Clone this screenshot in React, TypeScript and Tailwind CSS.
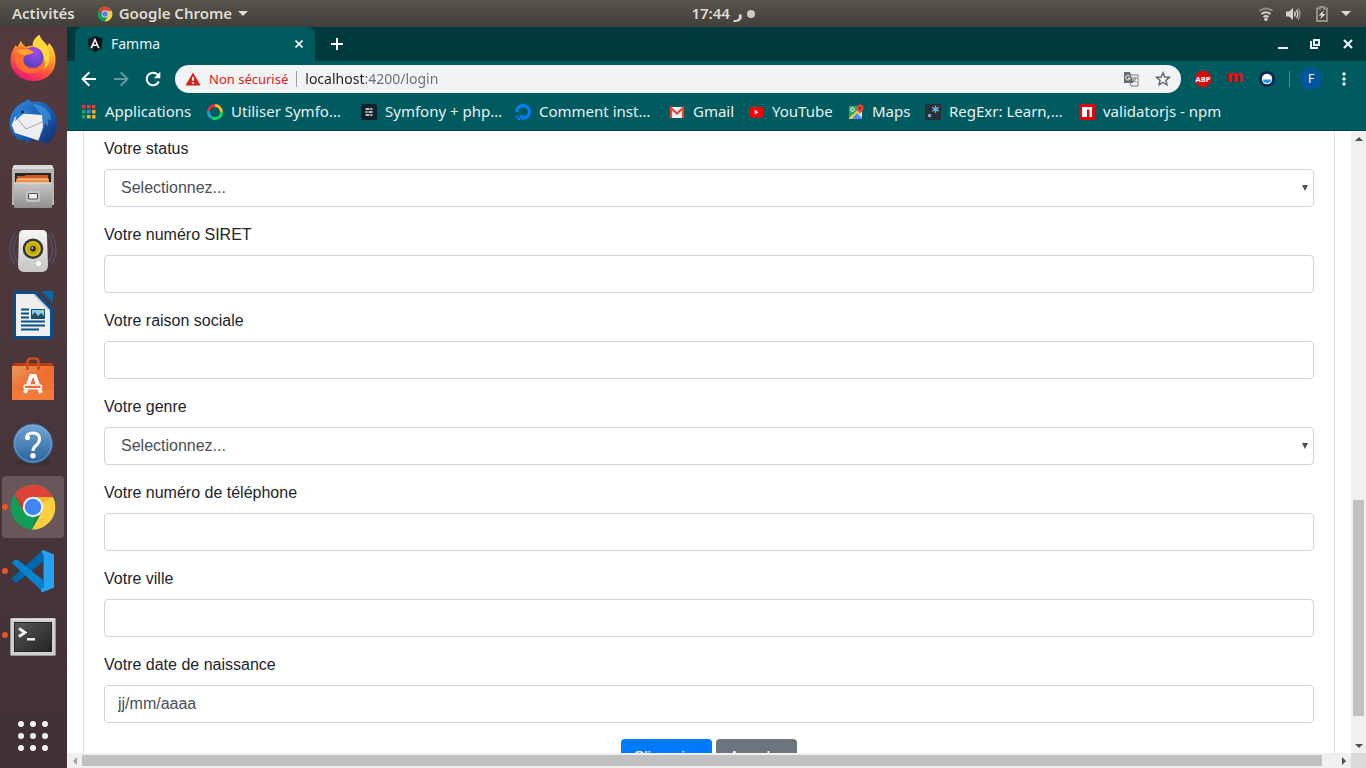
import React, { useId } from "react";

type IconProps = { className?: string };

function ChromeIcon({ className }: IconProps) {
  return (
    <svg viewBox="0 0 48 48" className={className} aria-hidden="true">
      <circle cx="24" cy="24" r="22.4" fill="#0f9d58" />
      <path d="M24 14H43.9A22.4 22.4 0 0 1 22.9 46.4L32.7 29Z" fill="#ffcd40" />
      <path d="M24 14H43.9A22.4 22.4 0 0 0 5.2 11.8L15.3 29L24 24Z" fill="#db4437" />
      <path d="M15.3 29L5.2 11.8L14.5 21Z" fill="#b83226" opacity=".6" />
      <path d="M24 14H43.9L33.5 20Z" fill="#d9a520" opacity=".5" />
      <path d="M32.7 29L22.9 46.4L26 33Z" fill="#0a7a43" opacity=".5" />
      <circle cx="24" cy="24" r="10.2" fill="#f1f1f1" />
      <circle cx="24" cy="24" r="8.2" fill="#4285f4" />
    </svg>
  );
}

function FirefoxIcon({ className }: IconProps) {
  const id = useId();
  return (
    <svg viewBox="0 0 48 48" className={className} aria-hidden="true">
      <defs>
        <linearGradient id={id + "a"} x1=".8" y1="0" x2=".3" y2="1">
          <stop offset="0" stopColor="#fff14a" />
          <stop offset=".35" stopColor="#ffa82a" />
          <stop offset=".65" stopColor="#ff5a36" />
          <stop offset="1" stopColor="#e6127a" />
        </linearGradient>
        <radialGradient id={id + "b"} cx=".6" cy=".25" r=".8">
          <stop offset="0" stopColor="#a04bf2" />
          <stop offset="1" stopColor="#4e43b5" />
        </radialGradient>
      </defs>
      <path d="M30.5 0C32 5 36 7 38.500 11L40 8C45 13 47 20 46.500 27C45.500 39 36 46 24.500 46C11 46 1.500 36.500 1.500 25C1.500 18 4 15 6.500 10L8.500 12L12 5.500C12.500 8 14.500 10 17 12C20 10.500 22 10.500 24 11C24 6 27 2 30.500 0Z" fill={"url(#" + id + "a)"} />
      <path d="M30.500 0C32 6 37 8 39.500 15C42 23 40 31 34 35C37 29 36 19 31 15C28 13 24 12 23.500 10C24 5 27 2 30.500 0Z" fill="#ffd83b" />
      <circle cx="24" cy="22.500" r="10.500" fill={"url(#" + id + "b)"} />
      <path d="M7 14C11 11 19 12 25 17C23 20 18 18.500 16 21C13 24 14 30 19 33C26 36 33 32 37 26C36 37 22 42 12 35C5 29 4 21 7 14Z" fill="#ff6d32" />
      <path d="M7 15C12 13 20 14 24.500 17C23 19.500 18 18.500 16 20.500C12 20 9 18 7 15Z" fill="#ffa52e" />
    </svg>
  );
}

function ThunderbirdIcon({ className }: IconProps) {
  const id = useId();
  return (
    <svg viewBox="0 0 48 48" className={className} aria-hidden="true">
      <defs>
        <linearGradient id={id} x1="0" y1="0" x2="1" y2="1">
          <stop offset="0" stopColor="#3489dd" />
          <stop offset=".5" stopColor="#1760b3" />
          <stop offset="1" stopColor="#152969" />
        </linearGradient>
      </defs>
      <path d="M15 3L20 0L22 3C37 0 48 12 48 25C48 34 43 42 35 47L36 42C30 44 25 42 24 40L17 45L17 41L10 41C3 36 0 29 0.500 22C2 12 8 6 15 3Z" fill={"url(#" + id + ")"} />
      <path d="M24 5C36 6 43 14 42 22L39 20L39 28L36 24L33 34L29 26L32 16Z" fill="#4aa4e8" opacity=".55" />
      <path d="M6 18L14 14.500L33 16L34 28L29.500 41.500L6 34L2.700 26Z" fill="#eeeef0" />
      <path d="M7 18L17 30L33 23" fill="none" stroke="#a7a8ad" strokeWidth="1" />
      <path d="M8 15C12 8 17 9 21 13L14 15L6 22Z" fill="#277bd0" />
      <circle cx="13.500" cy="13" r="1.500" fill="#17254a" />
    </svg>
  );
}

function FilesIcon({ className }: IconProps) {
  const id = useId();
  return (
    <svg viewBox="0 0 48 48" className={className} aria-hidden="true">
      <defs>
        <linearGradient id={id} x1="0" y1="0" x2="0" y2="1">
          <stop offset="0" stopColor="#c9c9c9" />
          <stop offset="1" stopColor="#8e8e8e" />
        </linearGradient>
      </defs>
      <path d="M5 2H43L45 7V42H3V7Z" fill="#b5b5b5" />
      <path d="M5 2H43L45 6H3Z" fill="#dcdcdc" />
      <rect x="6" y="10" width="36" height="10" fill="#252525" />
      <path d="M8 13H15L17 12H39L40 20H7Z" fill="#d4591c" />
      <path d="M7 16H40V20H7Z" fill="#ef8d42" />
      <path d="M9 16H39" stroke="#ffe3b2" strokeWidth="1" />
      <rect x="5" y="19.500" width="38" height="25.500" rx="1" fill={"url(#" + id + ")"} />
      <path d="M5 20H43" stroke="#e0e0e0" />
      <rect x="17" y="28" width="14" height="11" rx="2" fill="#c4c4c4" />
      <rect x="19.500" y="30.500" width="9" height="5.500" rx="1" fill="#eee" stroke="#555" strokeWidth="1.200" />
    </svg>
  );
}

function RhythmboxIcon({ className }: IconProps) {
  const id = useId();
  return (
    <svg viewBox="0 0 48 48" className={className} aria-hidden="true">
      <defs>
        <linearGradient id={id} x1="0" y1="0" x2="0" y2="1">
          <stop offset="0" stopColor="#f6f6f4" />
          <stop offset="1" stopColor="#c6c6c4" />
        </linearGradient>
      </defs>
      <g fill="none" stroke="#56679a" strokeWidth="1.200" opacity=".6">
        <path d="M6 6Q-4 22 6 38M9 8Q0 22 9 36M42 6Q52 22 42 38M39 8Q48 22 39 36" />
      </g>
      <path d="M15 3H33Q38 3 38 8L39 38Q39 45 33 45H15Q9 45 9 38L10 8Q10 3 15 3Z" fill={"url(#" + id + ")"} />
      <circle cx="24" cy="21.700" r="10.300" fill="#34363b" />
      <circle cx="24" cy="21.700" r="7.800" fill="#d9bc16" />
      <circle cx="24" cy="21.700" r="5" fill="none" stroke="#a8900a" />
      <circle cx="24" cy="21.700" r="3" fill="#303238" />
      <circle cx="23.300" cy="21" r="1" fill="#bbb" />
      <circle cx="29.500" cy="36.500" r="3.500" fill="#f7f7f7" stroke="#bdbdbd" />
      <rect x="14" y="35" width="5" height="5" rx="1" fill="none" stroke="#c5c5c5" />
    </svg>
  );
}

function WriterIcon({ className }: IconProps) {
  return (
    <svg viewBox="0 0 48 48" className={className} aria-hidden="true">
      <path d="M6 0H27L44 17V45.500Q44 48 42 48H6Q4 48 4 46V2Q4 0 6 0Z" fill="#07508a" />
      <path d="M32 0H44V12Z" fill="#0768a5" />
      <path d="M7 3H25.500L41 19V45H7Z" fill="#efefef" />
      <path d="M25.500 3L41 19V21L25 5Z" fill="#c8c8c8" />
      <path d="M12 18.500H20M12 22.500H20M12 26.500H20M12 30.500H36M12 34.500H36M12 38.500H30" stroke="#07508a" strokeWidth="2" />
      <rect x="22.500" y="18.500" width="13" height="9" fill="#8dd0f1" stroke="#07508a" />
      <path d="M23 27V24L26 21L29 25L32 22L35 25V27Z" fill="#2b4e59" />
      <circle cx="34" cy="20" r="1.300" fill="#e6c32a" />
    </svg>
  );
}

function SoftwareIcon({ className }: IconProps) {
  const id = useId();
  return (
    <svg viewBox="0 0 48 48" className={className} aria-hidden="true">
      <defs>
        <linearGradient id={id} x1="0" y1="0" x2="1" y2="1">
          <stop offset="0" stopColor="#e8995c" />
          <stop offset=".5" stopColor="#ee6d31" />
          <stop offset="1" stopColor="#f17739" />
        </linearGradient>
      </defs>
      <path d="M5 8H43L45 12H3Z" fill="#b63f14" />
      <path d="M3 11H45V45H3Z" fill={"url(#" + id + ")"} />
      <path d="M3 35H45V45H3Z" fill="#f5803f" opacity=".65" />
      <path d="M18.500 15V7Q18.500 3.500 22 3.500H26Q29.500 3.500 29.500 7V15" fill="none" stroke="#cf4c1d" strokeWidth="2.600" />
      <path d="M16 38L22.200 21H25.800L32 38" fill="none" stroke="#fff" strokeWidth="3.800" />
      <path d="M13.500 29.500H34.500V34.500H13.500Z" fill="#ee6d31" />
      <rect x="15" y="30" width="17.500" height="3.800" rx="1.900" fill="#ee6d31" stroke="#fff" strokeWidth="1.600" />
    </svg>
  );
}

function HelpIcon({ className }: IconProps) {
  const id = useId();
  return (
    <svg viewBox="0 0 48 48" className={className} aria-hidden="true">
      <defs>
        <linearGradient id={id} x1="0" y1="0" x2="0" y2="1">
          <stop offset="0" stopColor="#72a5d6" />
          <stop offset="1" stopColor="#29649c" />
        </linearGradient>
      </defs>
      <ellipse cx="24" cy="43" rx="18" ry="4" fill="#30252a" opacity=".4" />
      <circle cx="24" cy="24.500" r="19.500" fill={"url(#" + id + ")"} stroke="#3569a0" />
      <circle cx="24" cy="24.500" r="18.300" fill="none" stroke="#8eb9e2" strokeWidth=".8" opacity=".7" />
      <path d="M17.500 19Q17.500 14 24 14Q30.500 14 30.500 20Q30.500 23.500 27 26.500Q24 29 24 32" fill="none" stroke="#fff" strokeWidth="3" />
      <circle cx="18.500" cy="18.800" r="2.500" fill="#fff" />
      <circle cx="24" cy="36.700" r="2.700" fill="#fff" />
    </svg>
  );
}

function CodeIcon({ className }: IconProps) {
  return (
    <svg viewBox="0 0 48 48" className={className} aria-hidden="true">
      <path d="M3 31.500Q2.500 33 4 34L6 35.500Q7.500 36 8.500 35L34 15V3L4 30Z" fill="#0068aa" />
      <path d="M3.500 16.500Q2.500 15.500 4 14.500L6 12.800Q7.500 12 9 13L34 33V45Z" fill="#0a83cf" />
      <path d="M34 3L45 7.500V40.500L34 45Q31.500 45 32 43L34.500 40V8Q31.500 4 34 3Z" fill="#27a2f2" />
    </svg>
  );
}

function TerminalIcon({ className }: IconProps) {
  const id = useId();
  return (
    <svg viewBox="0 0 48 48" className={className} aria-hidden="true">
      <defs>
        <linearGradient id={id} x1="0" y1="0" x2="1" y2="1">
          <stop offset="0" stopColor="#565856" />
          <stop offset=".5" stopColor="#3c3e3c" />
          <stop offset="1" stopColor="#222" />
        </linearGradient>
      </defs>
      <rect x="1.500" y="7.500" width="45" height="37" rx="1" fill="#cfcfcf" stroke="#989898" />
      <path d="M2 8H46" stroke="#f6f6f6" />
      <rect x="5" y="11" width="38" height="30" fill="#232523" />
      <rect x="6" y="12" width="36" height="28" fill={"url(#" + id + ")"} />
      <path d="M10 17.500L16 21.500L10 25.500" fill="none" stroke="#f4f4f4" strokeWidth="2.800" />
      <path d="M18 28.300H26" stroke="#f4f4f4" strokeWidth="2.400" />
    </svg>
  );
}

const dockApps = [
  { name: "Firefox", Icon: FirefoxIcon, running: false, active: false },
  { name: "Thunderbird", Icon: ThunderbirdIcon, running: false, active: false },
  { name: "Fichiers", Icon: FilesIcon, running: false, active: false },
  { name: "Rhythmbox", Icon: RhythmboxIcon, running: false, active: false },
  { name: "LibreOffice Writer", Icon: WriterIcon, running: false, active: false },
  { name: "Logiciels", Icon: SoftwareIcon, running: false, active: false },
  { name: "Aide", Icon: HelpIcon, running: false, active: false },
  { name: "Google Chrome", Icon: ChromeIcon, running: true, active: true },
  { name: "Visual Studio Code", Icon: CodeIcon, running: true, active: false },
  { name: "Terminal", Icon: TerminalIcon, running: true, active: false },
];

function Dock() {
  return (
    <nav aria-label="Dock" className="flex w-[67px] shrink-0 flex-col gap-0.5 bg-linear-to-b from-[#533a3e] to-[#403135] px-0.5 pt-px">
      {dockApps.map(({ name, Icon, running, active }) => (
        <button
          key={name}
          aria-label={name}
          className={"relative flex h-[62px] w-[62px] shrink-0 items-center justify-center rounded " + (active ? "bg-[#69565a]" : "")}
        >
          {running && <span className="absolute left-0 size-[6px] rounded-full bg-[#e95420]" />}
          <Icon className="size-12" />
        </button>
      ))}
      <button aria-label="Afficher les applications" className="mt-auto mb-px flex h-[62px] w-[62px] items-center justify-center">
        <svg viewBox="0 0 32 32" className="size-8" fill="#f2f2f2" aria-hidden="true">
          {[4, 16, 28].map((y) => [4, 16, 28].map((x) => <circle key={x + "-" + y} cx={x} cy={y} r="3" />))}
        </svg>
      </button>
    </nav>
  );
}

function TopBar() {
  return (
    <header className="grid h-[27px] shrink-0 grid-cols-3 items-center bg-linear-to-b from-[#58544c] to-[#403f3a] text-[15px] font-semibold text-[#dfdbd2]">
      <div className="flex items-center pl-3">
        <button className="mr-[22px]">Activités</button>
        <button className="flex items-center gap-1.5">
          <ChromeIcon className="size-4" />
          Google Chrome
          <svg viewBox="0 0 10 5" className="h-[5px] w-[10px]" aria-hidden="true"><path d="M0 0H10L5 5Z" fill="#dfdbd2" /></svg>
        </button>
      </div>
      <button className="flex items-center justify-center gap-1 pl-[80px]">
        <span>17:44</span>
        <span className="font-['DejaVu_Sans',sans-serif]">ر</span>
        <span className="size-2 rounded-full bg-[#cfccc5]" />
      </button>
      <div className="flex items-center justify-end gap-[11px] pr-[15px]">
        <svg viewBox="0 0 16 16" className="size-4" fill="none" stroke="#d5d2cb" strokeWidth="2" aria-label="Wi-Fi">
          <path d="M1.500 5Q8 0 14.500 5" stroke="#8f8d87" /><path d="M3.500 8Q8 4.500 12.500 8M5.500 11Q8 9 10.500 11" /><circle cx="8" cy="13.200" r="1.800" fill="#d5d2cb" stroke="none" />
        </svg>
        <svg viewBox="0 0 16 16" className="size-4" fill="none" stroke="#d5d2cb" strokeWidth="1.500" aria-label="Volume">
          <path d="M1 5.500H4L8 2V14L4 10.500H1Z" fill="#d5d2cb" stroke="none" /><path d="M9.500 5.500Q11 8 9.500 10.500M11.500 4Q14 8 11.500 12" /><path d="M13 2Q17 8 13 14" stroke="#8f8d87" />
        </svg>
        <svg viewBox="0 0 16 16" className="ml-0.5 size-4" aria-label="Batterie">
          <path d="M6 1H10V2.500H13V15H3V2.500H6Z" fill="none" stroke="#96938c" strokeWidth="1.800" /><path d="M10 4L4.500 9.500H7.500L6 13.500L11.500 8H8.500Z" fill="#dfdbd2" />
        </svg>
        <svg viewBox="0 0 10 5" className="h-[5px] w-[10px]" aria-hidden="true"><path d="M0 0H10L5 5Z" fill="#dfdbd2" /></svg>
      </div>
    </header>
  );
}

function TabStrip() {
  return (
    <div className="flex h-[34px] shrink-0 items-stretch bg-[#003a3e] pl-2">
      <div className="flex w-60 items-center rounded-t-lg bg-[#005b61] pr-[11px] pl-3 text-sm text-[#e8f1f1]">
        <svg viewBox="0 0 16 16" className="size-4" aria-hidden="true">
          <path d="M8 0L15.500 2.700L14.300 12.500L8 16L1.700 12.500L.5 2.700Z" fill="#172126" />
          <path d="M8 0L15.500 2.700L14.300 12.500L8 16Z" fill="#0b1115" />
          <path d="M8 1.800L3.300 12.200H5.100L6 9.900H10L10.900 12.200H12.700ZM8 5.100L9.400 8.400H6.600Z" fill="#fff" fillRule="evenodd" />
        </svg>
        <span className="ml-2 flex-1">Famma</span>
        <button aria-label="Fermer l'onglet" className="p-px">
          <svg viewBox="0 0 8 8" className="size-2" stroke="#f0f6f6" strokeWidth="1.700" aria-hidden="true"><path d="M.5 .5L7.500 7.500M7.500 .5L.5 7.500" /></svg>
        </button>
      </div>
      <button aria-label="Nouvel onglet" className="ml-4 flex items-center">
        <svg viewBox="0 0 12 12" className="size-3" stroke="#fff" strokeWidth="2" aria-hidden="true"><path d="M6 0V12M0 6H12" /></svg>
      </button>
      <div className="ml-auto flex items-center gap-5 pr-3">
        <button aria-label="Réduire">
          <svg viewBox="0 0 12 12" className="size-3" aria-hidden="true"><path d="M0 9H10V11H0Z" fill="#e8f0f0" /></svg>
        </button>
        <button aria-label="Restaurer">
          <svg viewBox="0 0 12 12" className="size-3" fill="none" stroke="#e8f0f0" aria-hidden="true"><path d="M4 2H9V7H4Z" strokeWidth="2" /><path d="M1 3V10H8" strokeWidth="2" /></svg>
        </button>
        <button aria-label="Fermer">
          <svg viewBox="0 0 12 12" className="size-3" stroke="#e8f0f0" strokeWidth="2.200" aria-hidden="true"><path d="M2 2L10 10M10 2L2 10" /></svg>
        </button>
      </div>
    </div>
  );
}

function Toolbar() {
  return (
    <div className="flex h-9 shrink-0 items-center bg-[#005b61] px-3.5">
      <div className="flex gap-4">
        <button aria-label="Précédent">
          <svg viewBox="0 0 16 16" className="size-4" fill="none" stroke="#fff" strokeWidth="2" aria-hidden="true"><path d="M15 8H2M8.300 1.300L1.600 8L8.300 14.700" /></svg>
        </button>
        <button aria-label="Suivant">
          <svg viewBox="0 0 16 16" className="size-4" fill="none" stroke="#66989c" strokeWidth="2" aria-hidden="true"><path d="M1 8H14M7.700 1.300L14.400 8L7.700 14.700" /></svg>
        </button>
        <button aria-label="Actualiser">
          <svg viewBox="0 0 16 16" className="size-4" aria-hidden="true"><path d="M13.800 10.500A6.300 6.300 0 1 1 12.700 3.700L14 5" fill="none" stroke="#fff" strokeWidth="2" /><path d="M15.300 .8V7.200H8.900Z" fill="#fff" /></svg>
        </button>
      </div>
      <div className="ml-3.5 flex h-7 min-w-0 flex-1 items-center rounded-full bg-[#f1f3f4] px-2.5 text-sm">
        <svg viewBox="0 0 16 14" className="h-[14px] w-4" aria-hidden="true"><path d="M8 .5L15.500 13.500H.5Z" fill="#d92121" /><path d="M7.100 5H8.900V8.800H7.100ZM7.100 10H8.900V11.800H7.100Z" fill="#fff" /></svg>
        <span className="ml-2 text-[13px] whitespace-nowrap text-[#d92121]">Non sécurisé</span>
        <span className="mx-2 h-4 w-px bg-[#9aa0a6]" />
        <input
          aria-label="Adresse"
          defaultValue="localhost:4200/login"
          className="min-w-0 flex-1 bg-linear-to-r from-[#202124] from-[59px] to-[#6a6e72] to-[59px] bg-clip-text text-transparent outline-none"
        />
        <button aria-label="Traduire cette page">
          <svg viewBox="0 0 16 16" className="size-4" aria-hidden="true">
            <path d="M6 4H15V15H8Z" fill="#f1f3f4" stroke="#77797c" /><path d="M1 1H7L10.500 12H1Z" fill="#6a6d70" />
            <path d="M7 5.500A2.300 2.300 0 1 0 7.200 7.200H5" fill="none" stroke="#fff" /><path d="M9 7H14M11.500 6V7M13 7Q12 10 9.800 11M10 8Q11 10.500 13.500 11.500" fill="none" stroke="#77797c" />
          </svg>
        </button>
        <button aria-label="Ajouter aux favoris" className="ml-4">
          <svg viewBox="0 0 16 16" className="size-4" fill="none" stroke="#5f6368" strokeWidth="1.400" aria-hidden="true"><path d="M8 1.800L9.800 6L14.400 6.400L10.900 9.400L12 13.900L8 11.500L4 13.900L5.100 9.400L1.600 6.400L6.200 6Z" /></svg>
        </button>
      </div>
      <div className="ml-3.5 flex items-center gap-4">
        <button aria-label="Adblock Plus">
          <svg viewBox="0 0 16 16" className="size-4" aria-hidden="true"><path d="M4.700 0H11.300L16 4.700V11.300L11.300 16H4.700L0 11.300V4.700Z" fill="#d80b0b" /><text x="8" y="10.800" textAnchor="middle" fontSize="7.5" fontWeight="bold" fontFamily="Open Sans, sans-serif" fill="#fff">ABP</text></svg>
        </button>
        <button aria-label="Extension m" className="flex h-4 w-4 items-center justify-center pb-1 font-['DejaVu_Sans',sans-serif] text-base leading-4 font-bold text-[#f20808]">m</button>
        <button aria-label="Extension">
          <svg viewBox="0 0 16 16" className="size-4" aria-hidden="true"><circle cx="8" cy="8" r="8" fill="#0b2751" /><circle cx="8" cy="8" r="5.200" fill="#fff" /><path d="M3.600 8.500H12.400A4.500 4.500 0 0 1 3.600 8.500Z" fill="#1a96f0" /></svg>
        </button>
      </div>
      <span className="mx-3.5 h-4 w-px bg-[#4d8c90]" />
      <button aria-label="Profil" className="-ml-1 flex size-[22px] items-center justify-center rounded-full bg-[#01579b] text-xs text-white">F</button>
      <button aria-label="Menu" className="ml-3.5 flex w-4 justify-center">
        <svg viewBox="0 0 4 14" className="h-[14px] w-1" fill="#fff" aria-hidden="true"><circle cx="2" cy="2" r="1.700" /><circle cx="2" cy="7" r="1.700" /><circle cx="2" cy="12" r="1.700" /></svg>
      </button>
    </div>
  );
}

const appColours = ["#f0313a", "#f0313a", "#f0313a", "#1fa463", "#2a8cf0", "#f5b21c", "#1fa463", "#f5b21c", "#f5b21c"];

const bookmarks: { label: string; width: string; art: React.ReactNode }[] = [
  {
    label: "Applications",
    width: "w-[126px]",
    art: <>{appColours.map((c, i) => <rect key={i} x={1 + (i % 3) * 5} y={1 + Math.floor(i / 3) * 5} width="3.500" height="3.500" fill={c} />)}</>,
  },
  {
    label: "Utiliser Symfo…",
    width: "w-[154px]",
    art: (
      <g fill="none" strokeWidth="2.800">
        <path d="M8 1.500A6.500 6.500 0 0 1 14.500 8" stroke="#f9c02d" />
        <path d="M14.500 8A6.500 6.500 0 0 1 5 13.800" stroke="#12e05c" />
        <path d="M5 13.800A6.500 6.500 0 0 1 1.600 7" stroke="#1aa4d8" />
        <path d="M1.600 7A6.500 6.500 0 0 1 8 1.500" stroke="#ee2b3b" />
      </g>
    ),
  },
  {
    label: "Symfony + php…",
    width: "w-[154px]",
    art: <><rect width="16" height="16" rx="2.500" fill="#14202b" /><path d="M4.500 5H8.500M9.500 5H11.500M4.500 8H6.500M7.500 8H11.500M4.500 11H8.500M9.500 11H11.500" stroke="#f5f5f5" strokeWidth="1.500" /></>,
  },
  {
    label: "Comment inst…",
    width: "w-[154px]",
    art: <><path d="M1.600 8A6.400 6.400 0 1 1 8 14.300V11.300" fill="none" stroke="#0080ff" strokeWidth="3" /><path d="M5 11H8V14H5ZM2.500 13.500H5V16H2.500ZM.5 11.500H2.500V13.500H.5Z" fill="#0080ff" /></>,
  },
  {
    label: "Gmail",
    width: "w-[79px]",
    art: <><path d="M1 3H15V14H1Z" fill="#f2f2f2" /><path d="M2 14V4L8 9.500L14 4V14" fill="none" stroke="#e04535" strokeWidth="2.200" /></>,
  },
  {
    label: "YouTube",
    width: "w-[100px]",
    art: <><rect x="1" y="3" width="14.500" height="10.500" rx="2.500" fill="red" /><path d="M6.700 5.800L10.500 8.200L6.700 10.600Z" fill="#fff" /></>,
  },
  {
    label: "Maps",
    width: "w-[77px]",
    art: (
      <>
        <rect x="1" y="2" width="13" height="13" rx="1" fill="#e9e9e9" />
        <path d="M1 2H9L10 7L2 15H1Z" fill="#34a55b" />
        <path d="M1 14L12 4L14 6L5 15H1Z" fill="#f8cf45" />
        <path d="M4 15L9 9L14 14V15Z" fill="#4c8df5" />
        <circle cx="4.500" cy="5.500" r="1.800" fill="none" stroke="#fff" />
        <path d="M12 11C12 8 8.500 7 8.500 4A3.500 3.500 0 0 1 15.500 4C15.500 7 12 8 12 11Z" fill="#ea4335" /><circle cx="12" cy="4" r="1.200" fill="#8a2019" />
      </>
    ),
  },
  {
    label: "RegExr: Learn,…",
    width: "w-[154px]",
    art: <><rect width="16" height="16" fill="#2b2f33" /><rect x="3" y="10" width="3.200" height="3.200" rx="1" fill="#70b0e0" /><path d="M10.500 1.500V9M7.200 3.400L13.800 7.200M13.800 3.400L7.200 7.200" stroke="#70b0e0" strokeWidth="1.500" /></>,
  },
  {
    label: "validatorjs - npm",
    width: "w-[154px]",
    art: <><rect width="16" height="16" fill="#e00606" /><path d="M3 3H13V13H10.500V5.500H8V13H3Z" fill="#fff" /></>,
  },
];

function BookmarksBar() {
  return (
    <div className="flex h-[34px] shrink-0 items-center overflow-hidden border-b border-[#00444a] bg-[#005b61] pb-1 pl-3.5 text-[15px] text-[#e8f1f1]">
      {bookmarks.map(({ label, width, art }) => (
        <a key={label} href="#" className={"flex shrink-0 items-center gap-2 whitespace-nowrap " + width}>
          <svg viewBox="0 0 16 16" className="size-4 shrink-0" aria-hidden="true">{art}</svg>
          {label}
        </a>
      ))}
    </div>
  );
}

type Field = { id: string; label: string; kind: "text" | "select" | "date" };

const fields: Field[] = [
  { id: "status", label: "Votre status", kind: "select" },
  { id: "siret", label: "Votre numéro SIRET", kind: "text" },
  { id: "raison", label: "Votre raison sociale", kind: "text" },
  { id: "genre", label: "Votre genre", kind: "select" },
  { id: "telephone", label: "Votre numéro de téléphone", kind: "text" },
  { id: "ville", label: "Votre ville", kind: "text" },
  { id: "naissance", label: "Votre date de naissance", kind: "date" },
];

function FormField({ id, label, kind }: Field) {
  return (
    <div className="mb-4">
      <label htmlFor={id} className="mb-2 block">{label}</label>
      {kind === "select" ? (
        <div className="relative">
          <select id={id} className="block h-[38px] w-full appearance-none rounded border border-[#ced4da] bg-white px-4 text-[#495057]">
            <option>Selectionnez...</option>
          </select>
          <svg viewBox="0 0 6 6" className="pointer-events-none absolute top-4 right-1.5 size-1.5" aria-hidden="true"><path d="M0 0H6L3 6Z" fill="#495057" /></svg>
        </div>
      ) : (
        <input
          id={id}
          type="text"
          placeholder={kind === "date" ? "jj/mm/aaaa" : undefined}
          className="block h-[38px] w-full rounded border border-[#ced4da] bg-white px-[13px] text-[#495057] placeholder:text-[#495057]"
        />
      )}
    </div>
  );
}

function LoginPage() {
  return (
    <main className="min-w-0 flex-1 overflow-hidden bg-white px-4 font-['Liberation_Sans',Arial,sans-serif] text-base text-[#212529]">
      <form className="border-x border-[#dfdfdf] px-5 pt-1.5 pb-5">
        {fields.map((field) => <FormField key={field.id} {...field} />)}
        <div className="flex justify-center gap-1">
          <button type="submit" className="h-[38px] rounded bg-[#007bff] px-[13px] text-white">S'inscrire</button>
          <button type="button" className="h-[38px] rounded bg-[#6c757d] px-[13px] text-white">Annuler</button>
        </div>
      </form>
    </main>
  );
}

function ScrollArrow({ d, fill }: { d: string; fill: string }) {
  return (
    <span className="flex size-[15px] shrink-0 items-center justify-center">
      <svg viewBox="0 0 8 8" className="size-2" aria-hidden="true"><path d={d} fill={fill} /></svg>
    </span>
  );
}

export default function App() {
  return (
    <div className="flex h-screen flex-col overflow-hidden font-['Noto_Sans',sans-serif]">
      <TopBar />
      <div className="flex min-h-0 flex-1">
        <Dock />
        <div className="flex min-w-0 flex-1 flex-col">
          <TabStrip />
          <Toolbar />
          <BookmarksBar />
          <div className="flex min-h-0 flex-1">
            <LoginPage />
            <div className="flex w-[15px] shrink-0 flex-col items-center bg-[#f0f0f0]">
              <ScrollArrow d="M0 6L4 2L8 6Z" fill="#505050" />
              <span className="flex-[354]" />
              <span className="w-[11px] flex-[216] bg-[#c1c1c1]" />
              <span className="flex-[22]" />
              <ScrollArrow d="M0 2H8L4 6Z" fill="#505050" />
            </div>
          </div>
          <div className="flex h-[15px] shrink-0 items-center bg-[#f0f0f0]">
            <ScrollArrow d="M6 0V8L2 4Z" fill="#a3a3a3" />
            <span className="h-[11px] flex-[1240] bg-[#c1c1c1]" />
            <span className="flex-[14]" />
            <ScrollArrow d="M2 0L6 4L2 8Z" fill="#505050" />
            <span className="size-[15px] shrink-0 bg-[#dcdcdc]" />
          </div>
        </div>
      </div>
    </div>
  );
}
